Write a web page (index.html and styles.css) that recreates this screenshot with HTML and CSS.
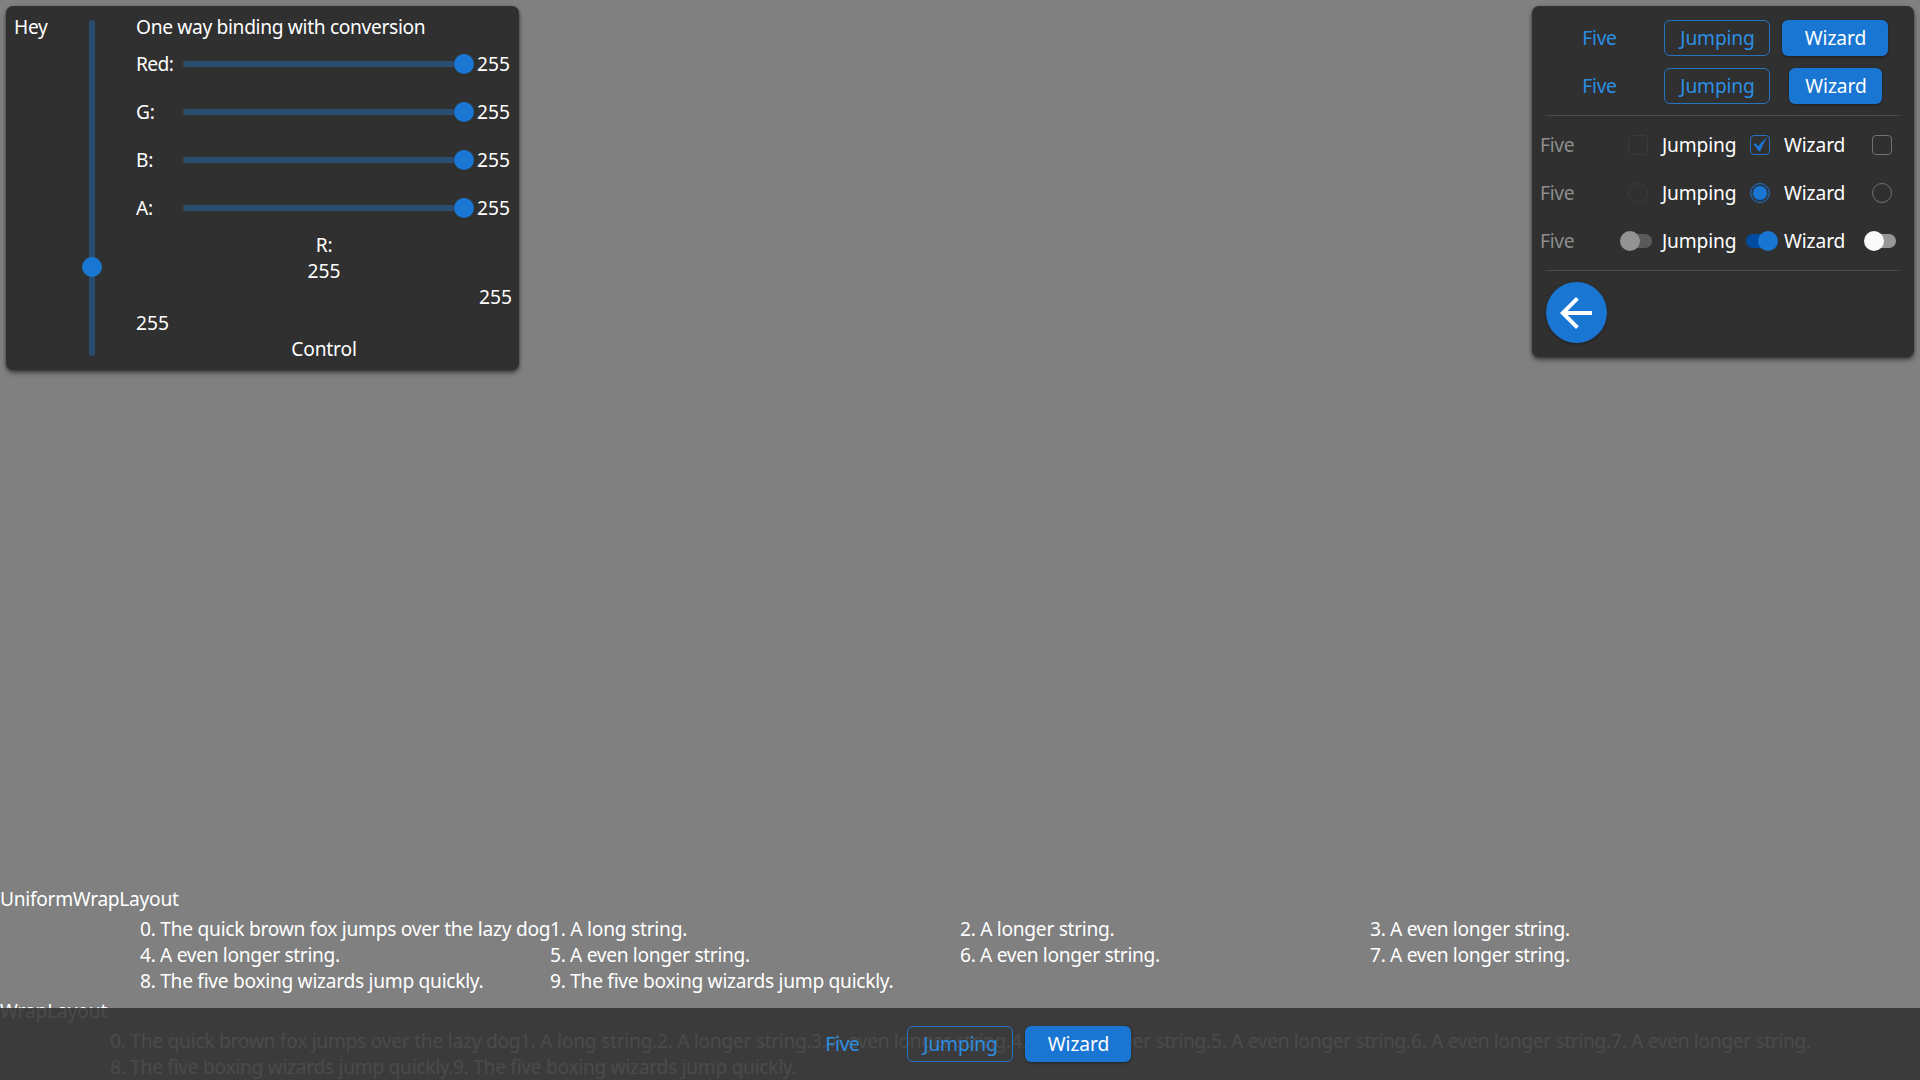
FILE: index.html
```html
<!DOCTYPE html>
<html lang="en">
<head>
<meta charset="utf-8">
<title>Controls</title>
<link rel="stylesheet" href="styles.css">
</head>
<body>
<div class="screen">
  <div class="top">
    <section class="panel binding">
      <div class="hey"><span class="t-hey">Hey</span></div>
      <div class="vslider"><div class="vtrack"></div><div class="thumb vthumb"></div></div>
      <div class="column">
        <div class="line"><span class="t-title">One way binding with conversion</span></div>
        <div class="row"><span class="name t-red">Red:</span><div class="slider"><div class="track"></div><div class="thumb"></div></div><span class="num">255</span></div>
        <div class="row"><span class="name">G:</span><div class="slider"><div class="track"></div><div class="thumb"></div></div><span class="num">255</span></div>
        <div class="row"><span class="name">B:</span><div class="slider"><div class="track"></div><div class="thumb"></div></div><span class="num">255</span></div>
        <div class="row"><span class="name">A:</span><div class="slider"><div class="track"></div><div class="thumb"></div></div><span class="num">255</span></div>
        <div class="line center"><span>R:</span></div>
        <div class="line center"><span class="num">255</span></div>
        <div class="line right"><span class="num">255</span></div>
        <div class="line"><span class="num">255</span></div>
        <div class="line center"><span class="t-control">Control</span></div>
      </div>
    </section>
    <section class="panel controls">
      <div class="buttons">
        <div class="btn text"><span class="t-five">Five</span></div>
        <div class="btn outlined"><span class="t-jumping">Jumping</span></div>
        <div class="btn filled"><span class="t-wizard">Wizard</span></div>
      </div>
      <div class="buttons">
        <div class="btn text"><span class="t-five">Five</span></div>
        <div class="btn outlined"><span class="t-jumping">Jumping</span></div>
        <div class="btn filled narrow"><span class="t-wizard">Wizard</span></div>
      </div>
      <div class="separator"></div>
      <div class="options">
        <span class="t-five off">Five</span><div class="box disabled"></div>
        <span class="t-jumping">Jumping</span><div class="box checked"><svg viewBox="0 0 20 20" width="20" height="20"><path d="M3.3 9.4 5.8 8.3 8.4 11.3C10.6 8 13.4 5 16.7 3 14.4 7 12.2 11.4 10.2 16.3H8.6C7.2 13.8 5.5 11.4 3.3 9.4Z" fill="#1976d2"/></svg></div>
        <span class="t-wizard">Wizard</span><div class="box"></div>
      </div>
      <div class="options">
        <span class="t-five off">Five</span><div class="box round disabled"></div>
        <span class="t-jumping">Jumping</span><div class="box round checked"><div class="dot"></div></div>
        <span class="t-wizard">Wizard</span><div class="box round"></div>
      </div>
      <div class="options">
        <span class="t-five off">Five</span><div class="switch disabled"><div class="knob"></div></div>
        <span class="t-jumping">Jumping</span><div class="switch on"><div class="knob"></div></div>
        <span class="t-wizard">Wizard</span><div class="switch"><div class="knob"></div></div>
      </div>
      <div class="separator"></div>
      <div class="fab"><svg viewBox="0 0 24 24" width="48" height="48"><path d="M20 11H7.83l5.59-5.59L12 4l-8 8 8 8 1.41-1.41L7.83 13H20z" fill="#fff"/></svg></div>
    </section>
  </div>
  <div class="layouts">
    <div class="line"><span class="t-uniform">UniformWrapLayout</span></div>
    <div class="uniform">
      <span class="t-fox">0. The quick brown fox jumps over the lazy dog</span>
      <span class="t-long">1. A long string.</span>
      <span class="t-longer">2. A longer string.</span>
      <span class="t-even">3. A even longer string.</span>
      <span class="t-even">4. A even longer string.</span>
      <span class="t-even">5. A even longer string.</span>
      <span class="t-even">6. A even longer string.</span>
      <span class="t-even">7. A even longer string.</span>
      <span class="t-boxing">8. The five boxing wizards jump quickly.</span>
      <span class="t-boxing">9. The five boxing wizards jump quickly.</span>
    </div>
    <div class="line"><span class="t-wrap">WrapLayout</span></div>
    <div class="wrap">
      <span class="t-fox w-fox">0. The quick brown fox jumps over the lazy dog</span>
      <span class="t-long w-long">1. A long string.</span>
      <span class="t-longer w-longer">2. A longer string.</span>
      <span class="t-even w-even">3. A even longer string.</span>
      <span class="t-even w-even">4. A even longer string.</span>
      <span class="t-even w-even">5. A even longer string.</span>
      <span class="t-even w-even">6. A even longer string.</span>
      <span class="t-even w-even">7. A even longer string.</span>
      <span class="t-boxing w-boxing">8. The five boxing wizards jump quickly.</span>
      <span class="t-boxing w-boxing">9. The five boxing wizards jump quickly.</span>
    </div>
  </div>
  <div class="bar">
    <div class="btn text"><span class="t-five">Five</span></div>
    <div class="btn outlined"><span class="t-jumping">Jumping</span></div>
    <div class="btn filled"><span class="t-wizard">Wizard</span></div>
  </div>
</div>
</body>
</html>
```
FILE: styles.css
```css
* { box-sizing: border-box; }
body {
  margin: 0;
  background: #808080;
  color: #fff;
  font: 19.2px/26px "Noto Sans", "Open Sans", sans-serif;
  letter-spacing: -0.3px;
}
span { white-space: nowrap; display: block; }
.screen {
  position: relative;
  width: 1920px;
  height: 1080px;
  overflow: hidden;
  display: flex;
  flex-direction: column;
  justify-content: space-between;
}
.top { display: flex; justify-content: space-between; align-items: flex-start; padding: 6px; }
.panel {
  background: #303030;
  border-radius: 7px;
  padding: 8px;
  box-shadow: 0 3px 5px rgba(0, 0, 0, .45), 0 1px 3px rgba(0, 0, 0, .3);
}

/* per-label tracking */
.t-title { letter-spacing: -0.34px; }
.t-red { letter-spacing: -0.6px; }
.num { letter-spacing: 0; }
.t-control, .t-jumping, .t-wrap { letter-spacing: -0.15px; }
.t-wizard { letter-spacing: -0.1px; }
.t-fox { letter-spacing: -0.27px; }
.t-long { letter-spacing: -0.25px; }
.t-even { letter-spacing: -0.34px; }

/* binding panel */
.binding { width: 513px; height: 364px; display: grid; grid-template-columns: 54px 48px 376px; column-gap: 0; }
.column { margin-left: 20px; width: 376px; }
.vslider { display: grid; justify-items: center; padding: 6px 0; }
.vtrack { grid-area: 1 / 1; width: 6px; height: 336px; border-radius: 3px; background: #284d6f; }
.thumb { width: 20px; height: 20px; border-radius: 50%; background: #1976d2; }
.vthumb { grid-area: 1 / 1; margin-top: 237px; }
.line { display: flex; height: 26px; }
.center { justify-content: center; }
.right { justify-content: flex-end; }
.row { display: flex; align-items: center; height: 48px; }
.name { width: 47px; }
.slider { display: flex; align-items: center; width: 291px; margin-right: 3px; }
.track { flex: 1; height: 6px; border-radius: 3px 0 0 3px; background: #284d6f; }

/* control panel */
.controls { width: 382px; height: 351px; display: flex; flex-direction: column; }
.btn {
  width: 106px;
  height: 36px;
  border-radius: 6px;
  display: flex;
  align-items: center;
  justify-content: center;
  color: #2b8fe4;
  padding-left: 1px;
}
.outlined { border: 1px solid #2673bf; }
.filled { background: #1976d2; color: #fff; box-shadow: 0 1px 3px rgba(0, 0, 0, .4); }
.narrow { width: 93px; margin: 0 6px 0 7px; }
.buttons { display: flex; gap: 12px; height: 48px; align-items: center; padding-left: 6px; }
.separator { height: 1px; margin: 5px 4px; background: linear-gradient(90deg, #303030, #4b4b4b 5px, #4b4b4b calc(100% - 5px), #303030); }
.options { display: grid; grid-template-columns: 76px 44px 78px 44px 78px 44px; height: 48px; align-items: center; }
.options > div { justify-self: center; }
.options .t-jumping, .options .t-wizard { padding-left: 2px; }
.off { color: #8d8d8d; }
.box { width: 20px; height: 20px; border: 1px solid #717171; border-radius: 4px; }
.box.disabled { border-color: #3b3b3b; }
.box.checked { border-color: #2372bf; }
.box.checked svg { display: block; margin: -1px; }
.box.round { border-radius: 50%; display: flex; align-items: center; justify-content: center; }
.box.round.checked { background: #24394e; }
.dot { width: 14px; height: 14px; border-radius: 50%; background: #1976d2; }
.switch { width: 28px; height: 14px; border-radius: 7px; background: #979797; display: flex; align-items: center; }
.switch .knob { width: 20px; height: 20px; flex: none; margin: 0 -4px; border-radius: 50%; background: #fafafa; }
.switch.on { background: #004ba0; justify-content: flex-end; }
.switch.on .knob { background: #1976d2; }
.switch.disabled { background: #5a5a5a; }
.switch.disabled .knob { background: #939393; }
.fab { width: 61px; height: 61px; margin: 6px; border-radius: 50%; background: #1976d2; display: flex; align-items: center; justify-content: center; box-shadow: 0 1px 3px rgba(0, 0, 0, .4); }
.fab svg { margin-left: -1px; }

/* wrapping layouts */
.layouts { width: 1920px; }
.uniform { display: grid; grid-template-columns: repeat(4, 410px); justify-content: center; padding: 4px 0; }
.wrap { display: flex; flex-wrap: wrap; width: 1701px; margin: 4px 0 0 110px; }
.w-fox { width: 410px; }
.w-long { width: 137px; }
.w-longer { width: 154px; }
.w-even { width: 200px; }
.w-boxing { width: 343px; }

/* bottom bar overlays the wrapping layouts */
.bar {
  position: absolute;
  left: 0;
  right: 0;
  bottom: 0;
  height: 72px;
  display: flex;
  gap: 12px;
  align-items: center;
  justify-content: center;
  background: rgba(49, 49, 49, .88);
}
```
